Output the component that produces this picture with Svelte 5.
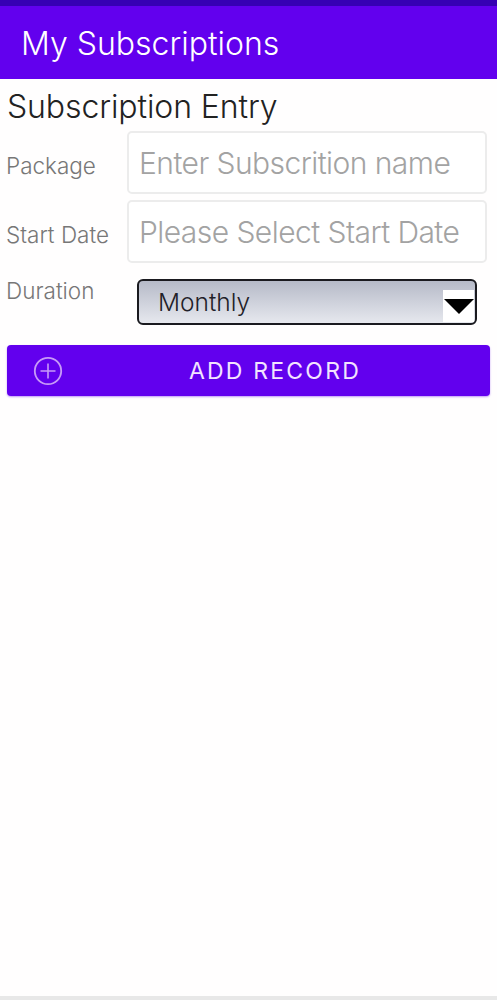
<script>
  let name = $state('');
  let startDate = $state('');
  let duration = $state('Monthly');
</script>

<div class="page">
  <div class="statusbar"></div>
  <header class="appbar">
    <h1>My Subscriptions</h1>
  </header>

  <main class="content">
    <h2>Subscription Entry</h2>

    <div class="row">
      <label for="pkg">Package</label>
      <input id="pkg" bind:value={name} placeholder="Enter Subscrition name" />
    </div>

    <div class="row">
      <label for="start">Start Date</label>
      <input id="start" bind:value={startDate} placeholder="Please Select Start Date" />
    </div>

    <div class="row duration">
      <label for="dur">Duration</label>
      <div class="select">
        <span id="dur">{duration}</span>
        <span class="arrow">
          <svg width="30" height="15" viewBox="0 0 30 15"><path d="M0 0 H30 L15 15 Z" fill="#000" /></svg>
        </span>
      </div>
    </div>

    <button type="button" class="add">
      <svg class="plus" width="30" height="30" viewBox="0 0 30 30" fill="none" stroke="#c79af7">
        <circle cx="15" cy="15" r="13.2" stroke-width="1.8" />
        <path d="M15 7.5 V22.5 M7.5 15 H22.5" stroke-width="1.6" />
      </svg>
      <span>ADD RECORD</span>
    </button>
  </main>

  <div class="navedge"></div>
</div>

<style>
  :global(body) {
    margin: 0;
    background: #fff;
  }

  .page {
    height: 1000px;
    display: flex;
    flex-direction: column;
    font-family: Inter, "Liberation Sans", sans-serif;
    font-weight: 300;
    overflow: hidden;
  }

  .statusbar {
    height: 6px;
    background: #3700b3;
  }

  .appbar {
    height: 73px;
    box-sizing: border-box;
    background: #6200ee;
    display: flex;
    align-items: center;
    padding: 2px 0 0 21px;
  }

  h1 {
    margin: 0;
    color: #fff;
    font-size: 32px;
    font-weight: 300;
  }

  .content {
    flex: 1;
    padding: 9px 7px 0;
    background: #fffefe;
  }

  h2 {
    margin: 0 0 5px;
    color: #222;
    font-size: 32px;
    line-height: 38px;
    font-weight: 300;
    letter-spacing: -0.1px;
  }

  .row {
    display: flex;
    align-items: center;
    height: 63px;
    margin-bottom: 6px;
  }

  label {
    width: 120px;
    flex: none;
    margin-left: -1px;
    margin-right: 1px;
    color: #777;
    font-size: 22.5px;
    padding-top: 5px;
  }

  input {
    width: 360px;
    height: 63px;
    box-sizing: border-box;
    border: 2px solid #ececec;
    border-radius: 5px;
    padding: 0 0 0 10px;
    background: #fff;
    font: inherit;
    font-size: 30px;
    letter-spacing: -0.55px;
    outline: none;
  }

  input::placeholder {
    color: #a3a3a3;
    opacity: 1;
  }

  .duration {
    height: 46px;
    margin: 16px 0 20px;
    align-items: flex-start;
  }

  .duration label {
    width: 130px;
    padding-top: 0;
    line-height: 24px;
  }

  .select {
    width: 340px;
    height: 46px;
    box-sizing: border-box;
    border: 2px solid #1a1a1f;
    border-radius: 6px;
    background: linear-gradient(#b6bac8, #e6e8ee);
    display: flex;
    align-items: center;
    justify-content: space-between;
    padding: 0 0 0 19px;
    color: #1f2128;
    font-size: 24.5px;
  }

  .arrow {
    width: 31px;
    height: 32px;
    align-self: flex-start;
    margin: 9px 1px 0 0;
    background: #fff;
    display: flex;
    align-items: center;
    justify-content: center;
  }

  .add {
    width: 483px;
    height: 51px;
    border: 0;
    border-radius: 4px;
    background: #6200ee;
    color: #f3e4ff;
    font: inherit;
    font-weight: 400;
    font-size: 23px;
    letter-spacing: 2.2px;
    display: flex;
    align-items: center;
    padding: 0 0 0 26px;
    box-shadow: 0 1px 2px rgba(98, 0, 238, 0.4);
  }

  .add span {
    margin-left: 126px;
  }

  .plus {
    flex: none;
  }

  .navedge {
    height: 4px;
    background: #e8e8e8;
  }
</style>
